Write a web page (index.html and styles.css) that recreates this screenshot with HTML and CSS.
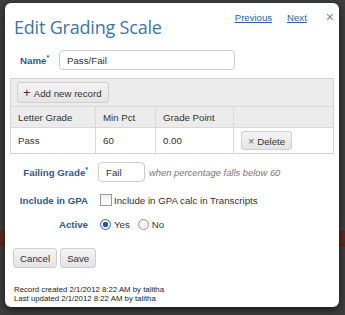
FILE: index.html
```html
<!DOCTYPE html>
<html lang="en">
  <head>
    <meta charset="UTF-8" />
    <title>Edit Grading Scale</title>
    <link rel="stylesheet" href="styles.css">
  </head>
  <body>
    <div class="backdrop-strip"></div>
    <div class="modal">
      <div class="modal-header">
        <h1 class="modal-title">Edit Grading Scale</h1>
        <div class="modal-nav">
          <a href="#">Previous</a>
          <a href="#">Next</a>
          <span class="modal-close">&times;</span>
        </div>
      </div>

      <div class="name-row">
        <label for="scale-name">Name<sup>*</sup></label>
        <input type="text" id="scale-name" class="text-input name-input" value="Pass/Fail" />
      </div>

      <div class="grid">
        <div class="grid-toolbar">
          <button class="btn btn-add"><span class="plus">+</span> Add new record</button>
        </div>
        <table class="grid-table">
          <thead>
            <tr>
              <th class="col-letter">Letter Grade</th>
              <th class="col-min">Min Pct</th>
              <th class="col-point">Grade Point</th>
              <th></th>
            </tr>
          </thead>
          <tbody>
            <tr>
              <td>Pass</td>
              <td>60</td>
              <td>0.00</td>
              <td><button class="btn btn-delete"><span class="x">&times;</span> Delete</button></td>
            </tr>
          </tbody>
        </table>
      </div>

      <div class="form-rows">
        <label class="form-label" for="failing">Failing Grade<sup>*</sup></label>
        <div class="form-field">
          <input type="text" id="failing" class="text-input fail-input" value="Fail" />
          <span class="hint">when percentage falls below 60</span>
        </div>

        <label class="form-label">Include in GPA</label>
        <div class="form-field">
          <span class="checkbox"></span>
          <span>Include in GPA calc in Transcripts</span>
        </div>

        <label class="form-label">Active</label>
        <div class="form-field">
          <span class="radio checked"></span><span>Yes</span>
          <span class="radio"></span><span>No</span>
        </div>
      </div>

      <div class="actions">
        <button class="btn">Cancel</button>
        <button class="btn">Save</button>
      </div>

      <div class="audit">
        Record created 2/1/2012 8:22 AM by talitha<br />
        Last updated 2/1/2012 8:22 AM by talitha
      </div>
    </div>
  </body>
</html>
```

FILE: styles.css
```css
body {
  margin: 0;
  height: 315px;
  overflow: hidden;
  background: #3e3e3e;
  font-family: "Liberation Sans", Arial, sans-serif;
  font-size: 9.7px;
  color: #333;
  position: relative;
}
.backdrop-strip {
  position: absolute;
  left: 0;
  right: 0;
  top: 231px;
  height: 16px;
  background: #5a2c1c;
}
.modal {
  position: relative;
  margin: 3px 0 0 5px;
  width: 334px;
  height: 304px;
  box-sizing: border-box;
  background: #fff;
  border-radius: 6px;
  box-shadow: 0 3px 8px rgba(0, 0, 0, 0.6);
  padding: 0 6px 0 5px;
}
.modal-header {
  display: flex;
  justify-content: space-between;
  align-items: flex-start;
  height: 47px;
}
.modal-title {
  margin: 12px 0 0 4px;
  font-family: "Open Sans", sans-serif;
  font-weight: 400;
  font-size: 18px;
  color: #3b74b3;
  letter-spacing: -0.2px;
}
.modal-nav {
  display: flex;
  align-items: center;
  margin-top: 6px;
}
.modal-nav a {
  color: #2b5fa8;
  font-size: 9.6px;
  margin-left: 15px;
}
.modal-close {
  color: #888;
  font-size: 14px;
  margin-left: 19px;
  margin-right: -1px;
}
sup {
  font-size: 7px;
  vertical-align: top;
  position: relative;
  top: -1px;
}
.name-row {
  display: flex;
  align-items: center;
  padding-left: 10px;
  height: 20px;
}
.name-row label {
  font-weight: 700;
  color: #2e5a8e;
  width: 39px;
}
.text-input {
  box-sizing: border-box;
  height: 20px;
  border: 1px solid #ccc;
  border-radius: 4px;
  padding: 0 7px;
  font-family: "Liberation Sans", Arial, sans-serif;
  font-size: 9.7px;
  color: #333;
}
.name-input {
  width: 176px;
}
.grid {
  margin-top: 8px;
  border: 1px solid #d5d5d5;
  width: 324px;
  box-sizing: border-box;
}
.grid-toolbar {
  background: #ececec;
  padding: 3px 6px;
  border-bottom: 1px solid #d9d9d9;
  height: 28px;
  box-sizing: border-box;
}
.btn {
  font-family: "Liberation Sans", Arial, sans-serif;
  font-size: 9.7px;
  color: #333;
  background: linear-gradient(#f4f4f4, #e4e4e4);
  border: 1px solid #cfcfcf;
  border-radius: 3px;
  padding: 0 5px;
  height: 20px;
}
.btn-add {
  height: 21px;
  padding: 0 6px 0 5px;
}
.plus {
  font-size: 13px;
  margin-right: 1px;
}
.grid-table {
  width: 100%;
  border-collapse: collapse;
}
.grid-table th,
.grid-table td {
  text-align: left;
  font-weight: 400;
  padding: 0 7px;
  border-left: 1px solid #d9d9d9;
}
.grid-table th:first-child,
.grid-table td:first-child {
  border-left: none;
}
.grid-table th {
  background: #ececec;
  height: 20px;
  border-bottom: 1px solid #d9d9d9;
}
.grid-table td {
  height: 25px;
}
.col-letter {
  width: 70px;
}
.col-min {
  width: 45px;
}
.col-point {
  width: 63px;
}
.btn-delete {
  height: 19px;
  padding: 0 6px;
}
.x {
  color: #666;
  font-size: 11px;
}
.form-rows {
  display: grid;
  grid-template-columns: 78px 1fr;
  grid-template-rows: 20px 36px 12px;
  column-gap: 10px;
  margin-top: 8px;
  align-items: center;
}
.form-label {
  text-align: right;
  font-weight: 700;
  color: #2e5a8e;
}
.form-field {
  display: flex;
  align-items: center;
  height: 20px;
}
.fail-input {
  width: 47px;
}
.hint {
  font-style: italic;
  font-size: 9.4px;
  color: #777;
  margin-left: 4px;
}
.checkbox {
  width: 10px;
  height: 10px;
  border: 1px solid #999;
  background: linear-gradient(#eee, #fff);
  margin: 0 2px;
}
.radio {
  width: 9px;
  height: 9px;
  border: 1px solid #999;
  border-radius: 50%;
  background: #f2f2f2;
  margin: 0 3px 0 2px;
}
.radio + span {
  margin-right: 6px;
}
.radio.checked {
  border-color: #3a6ea5;
  background: radial-gradient(circle, #2a5a9a 0 2.5px, #e6eef7 3px);
}
.actions {
  display: flex;
  gap: 3px;
  margin-top: 18px;
  padding-left: 3px;
}
.actions .btn {
  height: 20px;
  padding: 0 6px;
}
.audit {
  margin-top: 18px;
  margin-left: 4px;
  font-size: 7.8px;
  line-height: 8.5px;
  color: #222;
}
```
